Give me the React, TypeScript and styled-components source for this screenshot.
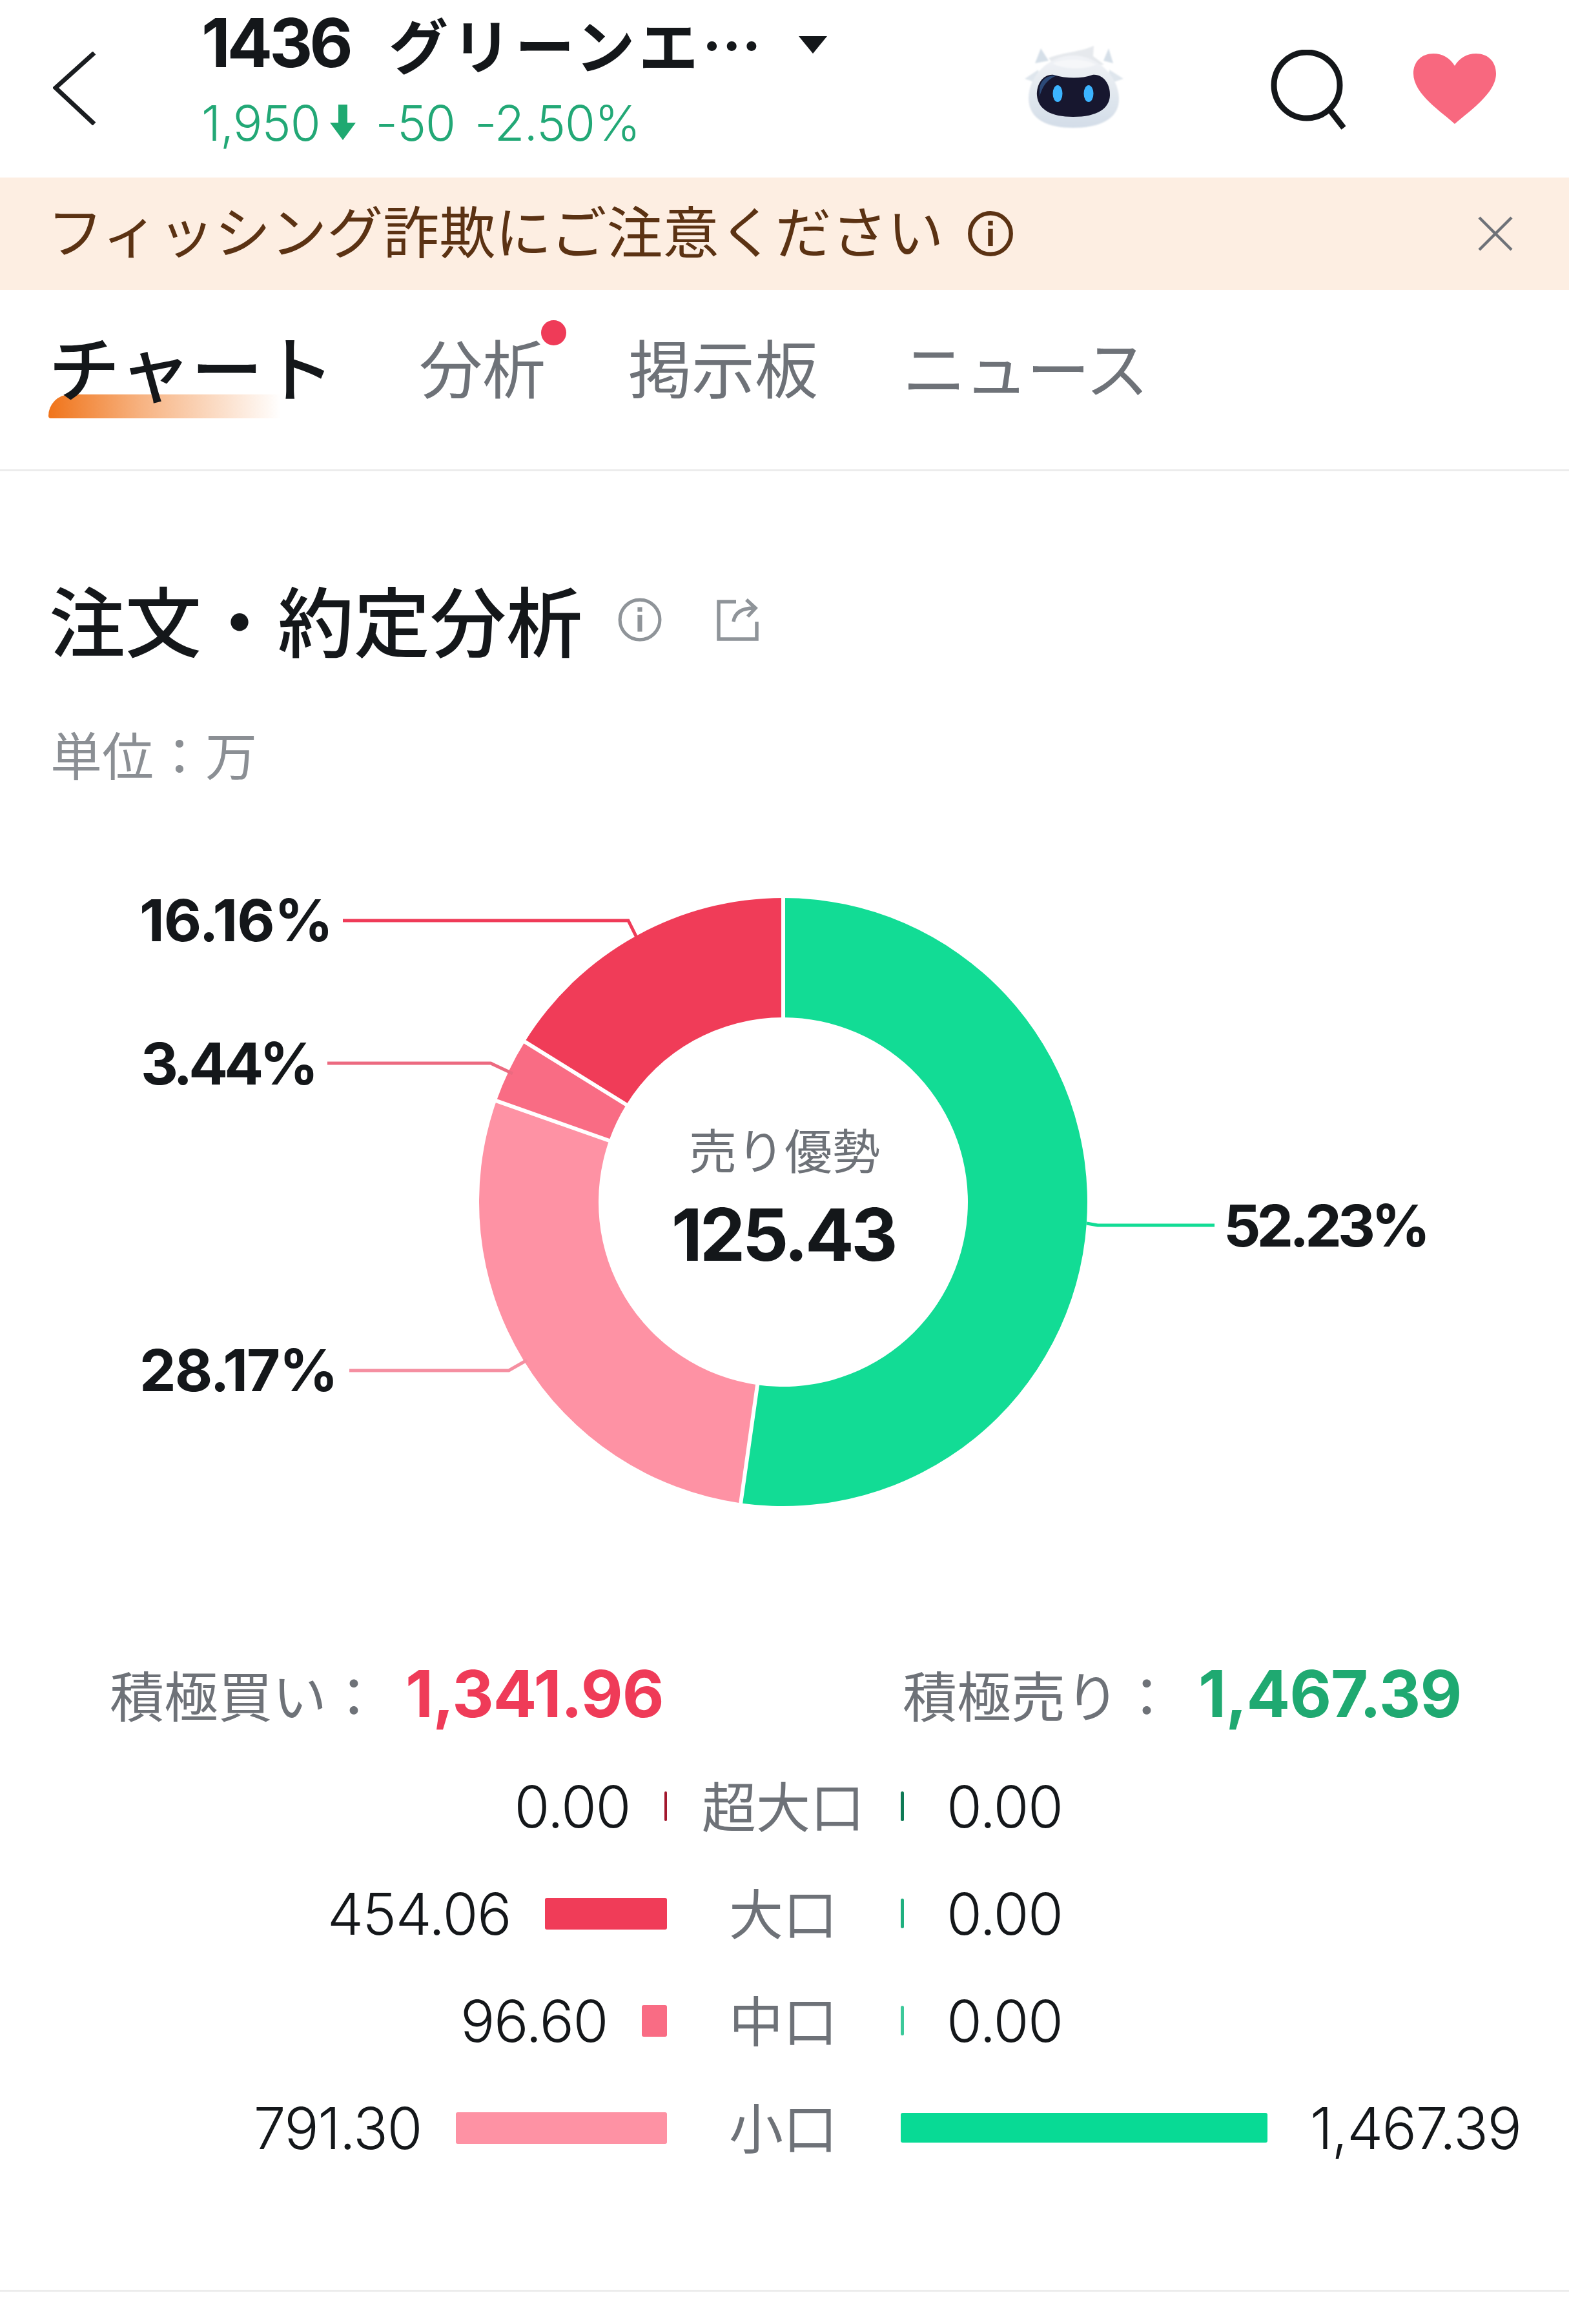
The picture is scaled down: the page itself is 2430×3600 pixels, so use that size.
import { Fragment } from "react";
import styled, { createGlobalStyle } from "styled-components";

const NUM_FONT = `Inter, "Noto Sans CJK JP", sans-serif`;

const GlobalStyle = createGlobalStyle`
  html, body {
    margin: 0;
    padding: 0;
    background: #fff;
    font-family: Roboto, "Noto Sans CJK JP", sans-serif;
  }
`;

const Page = styled.div`
  width: 2430px;
  height: 3600px;
  background: #fff;
  overflow: hidden;
`;

/* header */
const Header = styled.header`
  height: 275px;
  display: flex;
  align-items: flex-start;
`;
const IconSlot = styled.div<{ $top: number; $left: number }>`
  display: flex;
  flex-shrink: 0;
  margin-top: ${(p) => p.$top}px;
  margin-left: ${(p) => p.$left}px;
`;
const TitleBlock = styled.div`
  flex: 1;
  margin-left: 162px;
  padding-top: 8px;
`;
const TitleRow = styled.div`
  display: flex;
  align-items: center;
  height: 116px;
  color: #14171a;
`;
const Code = styled.span`
  font-family: ${NUM_FONT};
  font-size: 104px;
  font-weight: 700;
  letter-spacing: -5px;
`;
const StockName = styled.span`
  margin-left: 60px;
  font-family: "Noto Sans CJK JP", sans-serif;
  font-size: 92px;
  font-weight: 600;
  letter-spacing: 6px;
  white-space: nowrap;
`;
const Caret = styled.span`
  width: 0;
  height: 0;
  margin-left: 52px;
  margin-top: 6px;
  border-left: 22px solid transparent;
  border-right: 22px solid transparent;
  border-top: 27px solid #14171a;
`;
const QuoteRow = styled.div`
  display: flex;
  align-items: center;
  height: 66px;
  margin-top: 33px;
  color: #22a876;
  font-family: ${NUM_FONT};
  font-size: 76px;
  font-weight: 350;
  letter-spacing: -1px;
`;
const QuoteValue = styled.span<{ $left?: number }>`
  display: flex;
  margin-left: ${(p) => p.$left ?? 0}px;
`;

/* notice */
const Notice = styled.div`
  height: 174px;
  background: #fdeee2;
  display: flex;
  align-items: center;
  padding: 0 87px 0 73px;
  color: #5b3213;
`;
const NoticeText = styled.span`
  font-size: 87px;
  font-weight: 400;
  white-space: nowrap;
  margin-top: -14px;
`;
const NoticeIcon = styled.span`
  display: flex;
  margin-left: 36px;
  flex: 1;
`;

/* tabs */
const Tabs = styled.nav`
  height: 281px;
  box-sizing: border-box;
  border-bottom: 3px solid #ececec;
  display: flex;
  align-items: flex-start;
  padding: 62px 0 0 75px;
`;
const Tab = styled.div<{ $active?: boolean; $gap: number; $dot?: boolean; $tight?: boolean }>`
  position: relative;
  margin-right: ${(p) => p.$gap}px;
  font-size: ${(p) => (p.$active ? 111 : 98)}px;
  line-height: 130px;
  font-weight: ${(p) => (p.$active ? 500 : 400)};
  letter-spacing: ${(p) => (p.$tight ? -2 : 0)}px;
  color: ${(p) => (p.$active ? "#14171a" : "#6e7278")};
  white-space: nowrap;
  ${(p) =>
    p.$active &&
    `
    &::before {
      content: "";
      position: absolute;
      left: 0;
      top: 100px;
      width: 360px;
      height: 37px;
      border-radius: 36px 0 0 4px;
      background: linear-gradient(90deg, #f0741a 0%, rgba(240, 116, 26, 0.55) 40%, rgba(240, 116, 26, 0) 100%);
      z-index: 0;
    }
  `}
  ${(p) =>
    p.$dot &&
    `
    &::after {
      content: "";
      position: absolute;
      right: -32px;
      top: -15px;
      width: 39px;
      height: 39px;
      border-radius: 50%;
      background: #ef3b58;
    }
  `}
`;
const TabLabel = styled.span`
  position: relative;
  z-index: 1;
`;

/* section */
const SectionHead = styled.div`
  display: flex;
  align-items: center;
  height: 130px;
  margin-top: 162px;
  padding-left: 76px;
`;
const SectionTitle = styled.h2`
  margin: 0;
  font-size: 118px;
  font-weight: 500;
  color: #14171a;
  white-space: nowrap;
`;
const SectionIcon = styled.span<{ $left: number }>`
  display: flex;
  margin-top: 6px;
  margin-left: ${(p) => p.$left}px;
`;
const Unit = styled.div`
  margin-top: 110px;
  padding-left: 78px;
  height: 84px;
  line-height: 84px;
  font-size: 80px;
  font-weight: 400;
  color: #8b8f94;
`;

/* donut */
const ChartWrap = styled.div`
  margin-top: 75px;
  height: 1130px;
`;
const ChartSvg = styled.svg`
  display: block;
`;
const Pct = styled.text<{ $spacing: number }>`
  font-family: ${NUM_FONT};
  font-size: 90px;
  font-weight: 700;
  letter-spacing: ${(p) => p.$spacing}px;
  fill: #14171a;
`;
const CenterCaption = styled.text`
  font-family: "Noto Sans CJK JP", sans-serif;
  font-size: 74px;
  font-weight: 400;
  fill: #6e7278;
`;
const CenterValue = styled.text`
  font-family: ${NUM_FONT};
  font-size: 112px;
  font-weight: 700;
  letter-spacing: -4.5px;
  fill: #14171a;
`;

/* totals */
const Totals = styled.div`
  display: flex;
  align-items: center;
  height: 110px;
  margin-top: 147px;
  padding-left: 170px;
`;
const TotalItem = styled.div<{ $width: number }>`
  display: flex;
  align-items: center;
  width: ${(p) => p.$width}px;
`;
const TotalLabel = styled.span`
  font-size: 84px;
  font-weight: 400;
  color: #6e7278;
  white-space: nowrap;
`;
const TotalValue = styled.span<{ $color: string }>`
  margin-left: 38px;
  font-family: ${NUM_FONT};
  font-size: 100px;
  font-weight: 700;
  letter-spacing: -1px;
  color: ${(p) => p.$color};
`;

/* breakdown */
const Breakdown = styled.div`
  margin-top: 37px;
  display: grid;
  grid-template-columns: 1033px 362px 1fr;
  grid-auto-rows: 166px;
  align-items: center;
`;
const BuySide = styled.div`
  display: flex;
  justify-content: flex-end;
  align-items: center;
  gap: 53px;
`;
const SellSide = styled.div`
  display: flex;
  align-items: center;
  gap: 66px;
`;
const Amount = styled.span`
  font-family: ${NUM_FONT};
  font-size: 89px;
  font-weight: 350;
  letter-spacing: -1.5px;
  color: #14171a;
`;
const SizeLabel = styled.span`
  text-align: center;
  font-size: 84px;
  font-weight: 400;
  color: #6e7278;
  white-space: nowrap;
  padding-right: 2px;
  margin-bottom: 8px;
`;
const Bar = styled.div<{ $color: string; $thin?: boolean }>`
  height: ${(p) => (p.$thin ? 46 : 49)}px;
  background: ${(p) => p.$color};
  border-radius: 3px;
  flex-shrink: 0;
`;
const BottomRule = styled.div`
  height: 3px;
  margin-top: 168px;
  background: #ececec;
`;

/* icons */
const BackIcon = () => (
  <svg width="68" height="114" viewBox="0 0 68 114">
    <path d="M64 2 L4 56 L64 112" fill="none" stroke="#1a1d20" strokeWidth="7" />
  </svg>
);

const RobotIcon = () => (
  <svg width="220" height="190" viewBox="0 0 220 190">
    <defs>
      <linearGradient id="shell" x1="0" y1="0" x2="0" y2="1">
        <stop offset="0" stopColor="#f1f3f6" />
        <stop offset="1" stopColor="#d3dde8" />
      </linearGradient>
      <filter id="soft">
        <feGaussianBlur stdDeviation="0.9" />
      </filter>
    </defs>
    <g filter="url(#soft)">
      <path d="M63 58 L72 35 L84 54 Z" fill="#d5dfe8" />
      <path d="M169 54 L177 35 L184 58 Z" fill="#d5dfe8" />
      <path d="M84 50 C102 42 135 40 154 31 L153 47 L170 60 L100 70 Z" fill="#e6e9ed" />
      <path d="M47 82 L68 68 L70 90 Z" fill="#dfe6ed" />
      <path d="M200 82 L178 68 L176 90 Z" fill="#dfe6ed" />
      <path d="M122 46 C160 46 192 78 193 112 C194 146 160 158 122 158 C84 158 53 146 53 112 C53 78 84 46 122 46 Z" fill="url(#shell)" />
      <path d="M90 58 C110 50 135 50 158 60 C142 68 105 68 90 58 Z" fill="#f6f7f9" />
    </g>
    <path d="M92 76 C112 82 135 82 152 76 C168 74 180 90 179 108 C178 128 160 141 122 141 C88 141 68 130 66 108 C65 90 76 74 92 76 Z" fill="#17172f" />
    <path d="M70 96 C72 84 82 76 96 77 C86 82 76 88 70 110 Z" fill="#2c4a78" />
    <ellipse cx="98" cy="105" rx="7.5" ry="13" fill="#3cb4ff" />
    <ellipse cx="146" cy="105" rx="7.5" ry="13" fill="#3cb4ff" />
  </svg>
);

const SearchIcon = () => (
  <svg width="116" height="124" viewBox="0 0 116 124">
    <circle cx="56" cy="55" r="51" fill="none" stroke="#14171a" strokeWidth="9" />
    <path d="M92 94 L113 121" stroke="#14171a" strokeWidth="9" />
  </svg>
);

const HeartIcon = () => (
  <svg width="130" height="112" viewBox="0 0 130 112">
    <path
      d="M65 110 C46 92 1 64 1 32 C1 13 14 1 32 1 C46 1 58 8 65 20 C72 8 84 1 98 1 C116 1 129 13 129 32 C129 64 84 92 65 110 Z"
      fill="#f8687f"
    />
  </svg>
);

const DownArrow = () => (
  <svg width="42" height="56" viewBox="0 0 42 56">
    <path d="M14 0 H28 V28 H41 L21 55 L1 28 H14 Z" fill="#1fa971" />
  </svg>
);

const InfoIcon = ({ size, color, weight }: { size: number; color: string; weight: number }) => (
  <svg width={size} height={size} viewBox="0 0 68 68">
    <circle cx="34" cy="34" r="30" fill="none" stroke={color} strokeWidth={weight} />
    <rect x="30.5" y="15" width="7" height="7" fill={color} />
    <rect x="30.5" y="27" width="7" height="25" fill={color} />
  </svg>
);

const CloseIcon = () => (
  <svg width="54" height="54" viewBox="0 0 54 54">
    <path d="M2 2 L52 52 M52 2 L2 52" stroke="#6e7278" strokeWidth="4.5" />
  </svg>
);

const ShareIcon = () => (
  <svg width="66" height="66" viewBox="0 0 66 66">
    <path d="M30 5 H3 V63 H62 V36" fill="none" stroke="#8f9499" strokeWidth="5.5" />
    <path d="M26 36 C28 22 38 15 58 15 M46 2 L60 15 L48 28" fill="none" stroke="#8f9499" strokeWidth="5.5" />
  </svg>
);

/* chart data, angles run clockwise from twelve o'clock */
const CX = 1213;
const CY = 1861;
const R_OUT = 471;
const R_IN = 286;
const segments = [
  { pct: 52.23, color: "#12dc95" },
  { pct: 28.17, color: "#fe92a4" },
  { pct: 3.44, color: "#f96c84" },
  { pct: 16.16, color: "#f03c58" },
];

const polar = (r: number, turn: number) => {
  const a = turn * 2 * Math.PI;
  return [CX + r * Math.sin(a), CY - r * Math.cos(a)];
};

const sectorPath = (from: number, to: number) => {
  const [ax, ay] = polar(R_OUT, from);
  const [bx, by] = polar(R_OUT, to);
  const [cx, cy] = polar(R_IN, to);
  const [dx, dy] = polar(R_IN, from);
  const large = to - from > 0.5 ? 1 : 0;
  return `M${ax} ${ay} A${R_OUT} ${R_OUT} 0 ${large} 1 ${bx} ${by} L${cx} ${cy} A${R_IN} ${R_IN} 0 ${large} 0 ${dx} ${dy} Z`;
};

const Donut = () => {
  let turn = 0;
  const parts = segments.map((s) => {
    const from = turn;
    turn += s.pct / 100;
    return { ...s, from, to: turn };
  });
  return (
    <ChartSvg width="2430" height="1130" viewBox="0 1290 2430 1130">
      {parts.map((p) => (
        <path key={p.pct} d={sectorPath(p.from, p.to)} fill={p.color} />
      ))}
      {parts.map((p) => {
        const [x1, y1] = polar(R_IN - 2, p.from);
        const [x2, y2] = polar(R_OUT + 2, p.from);
        return <line key={p.pct} x1={x1} y1={y1} x2={x2} y2={y2} stroke="#fff" strokeWidth="6" />;
      })}
      <path d="M531 1425 H973 L987 1453" fill="none" stroke="#ef3b58" strokeWidth="5" />
      <path d="M507 1646 H760 L794 1662" fill="none" stroke="#ec6a80" strokeWidth="5" />
      <path d="M541 2122 H788 L816 2106" fill="none" stroke="#f58fa1" strokeWidth="5" />
      <path d="M1683 1894 L1700 1897 H1881" fill="none" stroke="#12dc95" strokeWidth="5" />
      <Pct $spacing={-1} x="216" y="1457">16.16%</Pct>
      <Pct $spacing={-6} x="218" y="1679">3.44%</Pct>
      <Pct $spacing={-2} x="216" y="2154">28.17%</Pct>
      <Pct $spacing={-6} x="1895" y="1930">52.23%</Pct>
      <CenterCaption x="1215" y="1810" textAnchor="middle">売り優勢</CenterCaption>
      <CenterValue x="1213" y="1952" textAnchor="middle">125.43</CenterValue>
    </ChartSvg>
  );
};

const rows = [
  { size: "超大口", buy: "0.00", buyW: 4, buyC: "#a3182e", sell: "0.00", sellW: 5, sellC: "#0e7a55", thin: true },
  { size: "大口", buy: "454.06", buyW: 189, buyC: "#f03c58", sell: "0.00", sellW: 5, sellC: "#1fb07f", thin: false },
  { size: "中口", buy: "96.60", buyW: 39, buyC: "#f96c84", sell: "0.00", sellW: 5, sellC: "#3cc99a", thin: false },
  { size: "小口", buy: "791.30", buyW: 327, buyC: "#fe92a4", sell: "1,467.39", sellW: 568, sellC: "#08da95", thin: false },
];

export default function App() {
  return (
    <Page>
      <GlobalStyle />
      <Header>
        <IconSlot $top={80} $left={82}>
          <BackIcon />
        </IconSlot>
        <TitleBlock>
          <TitleRow>
            <Code>1436</Code>
            <StockName>グリーンエ…</StockName>
            <Caret />
          </TitleRow>
          <QuoteRow>
            <span>1,950</span>
            <QuoteValue $left={14}>
              <DownArrow />
            </QuoteValue>
            <QuoteValue $left={30}>-50</QuoteValue>
            <QuoteValue $left={30}>-2.50%</QuoteValue>
          </QuoteRow>
        </TitleBlock>
        <IconSlot $top={40} $left={0}>
          <RobotIcon />
        </IconSlot>
        <IconSlot $top={77} $left={208}>
          <SearchIcon />
        </IconSlot>
        <IconSlot $top={82} $left={104}>
          <HeartIcon />
        </IconSlot>
        <IconSlot $top={0} $left={112} />
      </Header>

      <Notice>
        <NoticeText>フィッシング詐欺にご注意ください</NoticeText>
        <NoticeIcon>
          <InfoIcon size={72} color="#5b3213" weight={6} />
        </NoticeIcon>
        <CloseIcon />
      </Notice>

      <Tabs>
        <Tab $active $gap={131}>
          <TabLabel>チャート</TabLabel>
        </Tab>
        <Tab $gap={128} $dot>
          <TabLabel>分析</TabLabel>
        </Tab>
        <Tab $gap={131}>
          <TabLabel>掲示板</TabLabel>
        </Tab>
        <Tab $gap={0} $tight>
          <TabLabel>ニュース</TabLabel>
        </Tab>
      </Tabs>

      <SectionHead>
        <SectionTitle>注文・約定分析</SectionTitle>
        <SectionIcon $left={54}>
          <InfoIcon size={70} color="#8f9499" weight={5} />
        </SectionIcon>
        <SectionIcon $left={84}>
          <ShareIcon />
        </SectionIcon>
      </SectionHead>
      <Unit>単位：万</Unit>

      <ChartWrap>
        <Donut />
      </ChartWrap>

      <Totals>
        <TotalItem $width={1228}>
          <TotalLabel>積極買い：</TotalLabel>
          <TotalValue $color="#ef3b58">1,341.96</TotalValue>
        </TotalItem>
        <TotalItem $width={900}>
          <TotalLabel>積極売り：</TotalLabel>
          <TotalValue $color="#1fa971">1,467.39</TotalValue>
        </TotalItem>
      </Totals>

      <Breakdown>
        {rows.map((r) => (
          <Fragment key={r.size}>
            <BuySide>
              <Amount>{r.buy}</Amount>
              <Bar $color={r.buyC} $thin={r.thin} style={{ width: r.buyW }} />
            </BuySide>
            <SizeLabel>{r.size}</SizeLabel>
            <SellSide>
              <Bar $color={r.sellC} $thin style={{ width: r.sellW }} />
              <Amount>{r.sell}</Amount>
            </SellSide>
          </Fragment>
        ))}
      </Breakdown>
      <BottomRule />
    </Page>
  );
}
